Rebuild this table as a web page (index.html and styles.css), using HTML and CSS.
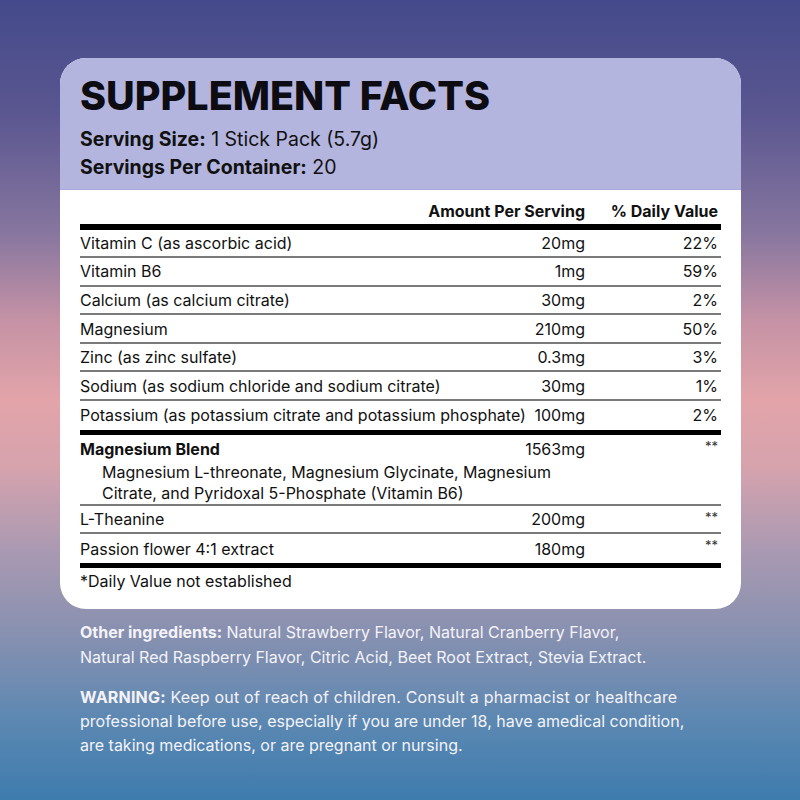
FILE: index.html
```html
<!DOCTYPE html>
<html lang="en">
<head>
<meta charset="utf-8">
<title>Supplement Facts</title>
<link rel="stylesheet" href="styles.css">
</head>
<body>
<div class="page">
  <section class="card">
    <header class="card-head">
      <h1 class="title">SUPPLEMENT FACTS</h1>
      <p class="serving"><b>Serving Size:</b> 1 Stick Pack (5.7g)</p>
      <p class="serving"><b>Servings Per Container:</b> 20</p>
    </header>
    <div class="facts">
      <div class="row head-row">
        <span></span>
        <span class="amt">Amount Per Serving</span>
        <span class="dv">% Daily Value</span>
      </div>
      <div class="rule-thick"></div>
      <div class="row item"><span>Vitamin C (as ascorbic acid)</span><span class="amt">20mg</span><span class="dv">22%</span></div>
      <div class="row item"><span>Vitamin B6</span><span class="amt">1mg</span><span class="dv">59%</span></div>
      <div class="row item"><span>Calcium (as calcium citrate)</span><span class="amt">30mg</span><span class="dv">2%</span></div>
      <div class="row item"><span>Magnesium</span><span class="amt">210mg</span><span class="dv">50%</span></div>
      <div class="row item"><span>Zinc (as zinc sulfate)</span><span class="amt">0.3mg</span><span class="dv">3%</span></div>
      <div class="row item"><span>Sodium (as sodium chloride and sodium citrate)</span><span class="amt">30mg</span><span class="dv">1%</span></div>
      <div class="row item last"><span>Potassium (as potassium citrate and potassium phosphate)</span><span class="amt">100mg</span><span class="dv">2%</span></div>
      <div class="rule-thick"></div>
      <div class="blend">
        <div class="row blend-row"><span class="blend-name">Magnesium Blend</span><span class="amt">1563mg</span><span class="dv star">**</span></div>
        <p class="blend-desc">Magnesium L-threonate, Magnesium Glycinate, Magnesium<br>Citrate, and Pyridoxal 5-Phosphate (Vitamin B6)</p>
      </div>
      <div class="row item"><span>L-Theanine</span><span class="amt">200mg</span><span class="dv star">**</span></div>
      <div class="row item last"><span>Passion flower 4:1 extract</span><span class="amt">180mg</span><span class="dv star">**</span></div>
      <div class="rule-thick"></div>
      <p class="footnote">*Daily Value not established</p>
    </div>
  </section>
  <div class="notes">
    <p class="note"><b>Other ingredients:</b> Natural Strawberry Flavor, Natural Cranberry Flavor,<br>Natural Red Raspberry Flavor, Citric Acid, Beet Root Extract, Stevia Extract.</p>
    <p class="note warn"><span class="wide"><b>WARNING:</b> Keep out of reach of children. Consult a pharmacist or healthcare</span><br>professional before use, especially if you are under 18, have amedical condition,<br>are taking medications, or are pregnant or nursing.</p>
  </div>
</div>
</body>
</html>
```

FILE: styles.css
```css
* { box-sizing: border-box; }
html, body { margin: 0; padding: 0; }
body {
  width: 800px;
  height: 800px;
  overflow: hidden;
  font-family: Inter, "Liberation Sans", sans-serif;
  color: #111;
}
.page {
  width: 800px;
  height: 800px;
  padding: 58px 59px 0 60px;
  background: linear-gradient(180deg,
    #444a8b 0%,
    #5a5690 14%,
    #86769f 29%,
    #c592a5 40%,
    #e2a4a9 50%,
    #d7a3ad 58%,
    #a999b2 69%,
    #8590b0 80%,
    #5c88b2 90%,
    #3e7cae 100%);
}
.card {
  width: 681px;
  background: #fff;
  border-radius: 26px;
  overflow: hidden;
}
.card-head {
  background: #b4b5df;
  padding: 18px 20px 8px 20px;
  border-bottom: 1px solid #a9aadc;
}
.title {
  margin: 0 0 9px 0;
  font-size: 39.5px;
  line-height: 40px;
  font-weight: 800;
  color: #0c0c12;
}
.serving {
  margin: 0;
  font-size: 19.5px;
  line-height: 28px;
  font-weight: 400;
}
.serving b { font-weight: 700; }
.facts {
  padding: 0 20px;
}
.row {
  display: grid;
  grid-template-columns: minmax(0, 1fr) 180px 133px;
  font-size: 16px;
  white-space: nowrap;
}
.row > span:first-child { overflow: visible; }
.row .amt { text-align: right; padding-right: 3px; }
.row .dv { text-align: right; padding-right: 3px; }
.head-row {
  height: 34px;
  align-items: end;
  padding-bottom: 3px;
  font-weight: 700;
  font-size: 16px;
  line-height: 20px;
}
.rule-thick {
  height: 5.5px;
  background: #000;
}
.item {
  height: 28.6px;
  align-items: center;
  border-bottom: 2px solid #7a7a7a;
  line-height: 20px;
}
.item.last { border-bottom: none; }
.blend {
  padding-top: 2.5px;
  border-bottom: 2px solid #7a7a7a;
}
.blend-row {
  line-height: 22px;
}
.blend-name { font-weight: 700; }
.star {
  font-size: 13px;
  line-height: 16px;
  color: #333;
}
.item .star { align-self: start; padding-top: 3px; }
.blend-desc {
  margin: 2px 0 0 0;
  padding-left: 22px;
  font-size: 16px;
  line-height: 21px;
}
.footnote {
  margin: 0;
  padding: 2px 0 17px 0;
  font-size: 16px;
  line-height: 22px;
}
.notes {
  padding: 11px 0 0 20px;
  color: #f5f3f8;
}
.note {
  margin: 0;
  font-size: 16px;
  line-height: 24.4px;
  white-space: nowrap;
}
.note b { font-weight: 700; }
.warn { margin-top: 15.5px; }
.wide { letter-spacing: 0.2px; }
```
